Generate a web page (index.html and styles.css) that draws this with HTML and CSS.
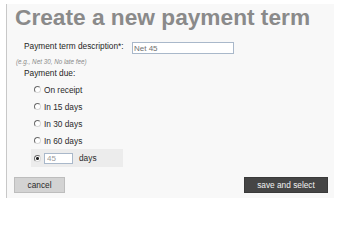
FILE: index.html
```html
<!DOCTYPE html>
<html>
<head>
<meta charset="utf-8">
<link rel="stylesheet" href="styles.css">
</head>
<body>
<div class="panel">
  <h1 class="title">Create a new payment term</h1>
  <div class="desc-row">
    <label class="desc-label" for="desc">Payment term description*:</label>
    <input class="desc-input" id="desc" type="text" value="Net 45">
  </div>
  <div class="hint">(e.g., Net 30, No late fee)</div>
  <div class="due-label">Payment due:</div>
  <div class="options">
    <label class="opt"><input class="radio" type="radio" name="due"><span>On receipt</span></label>
    <label class="opt"><input class="radio" type="radio" name="due"><span>In 15 days</span></label>
    <label class="opt"><input class="radio" type="radio" name="due"><span>In 30 days</span></label>
    <label class="opt"><input class="radio" type="radio" name="due"><span>In 60 days</span></label>
    <label class="opt opt-custom"><input class="radio" type="radio" name="due" checked><input class="days-input" type="text" value="45"><span class="days">days</span></label>
  </div>
  <div class="actions">
    <button class="btn btn-cancel">cancel</button>
    <button class="btn btn-save">save and select</button>
  </div>
</div>
</body>
</html>
```

FILE: styles.css
```css
html, body {
  margin: 0;
  padding: 0;
  background: #ffffff;
}
body {
  font-family: "Liberation Sans", Arial, sans-serif;
  color: #222;
}
.panel {
  margin: 4px 6px 0 6px;
  border-left: 1px solid #c8c8c8;
  background: #f8f8f8;
  padding: 2px 0 5px 0;
}
.title {
  margin: 0;
  padding-left: 8px;
  font-size: 22.7px;
  line-height: 23px;
  font-weight: bold;
  color: #8a8a8a;
  white-space: nowrap;
}
.desc-row {
  display: flex;
  align-items: flex-start;
  margin-top: 12px;
  padding-left: 17px;
}
.desc-label {
  width: 108px;
  font-size: 8.3px;
  line-height: 10px;
  color: #1e1e1e;
}
.desc-input {
  box-sizing: border-box;
  margin: 1px 0 0 0;
  width: 102px;
  height: 12px;
  border: 1px solid #a9b8ca;
  background: #fff;
  padding: 0 1px;
  font-family: "Liberation Sans", Arial, sans-serif;
  font-size: 8px;
  color: #707070;
  outline: none;
}
.hint {
  margin-top: 4px;
  padding-left: 9px;
  font-size: 6.3px;
  line-height: 8px;
  font-style: italic;
  color: #8a8a8a;
}
.due-label {
  margin-top: 2px;
  padding-left: 17px;
  font-size: 8.3px;
  line-height: 10px;
  color: #1e1e1e;
}
.options {
  margin-top: 3px;
  display: flex;
  flex-direction: column;
}
.opt {
  display: flex;
  align-items: center;
  height: 17px;
  margin-left: 24px;
  padding-left: 3px;
  font-size: 8.3px;
  color: #2a2a2a;
}
.opt-custom {
  width: 89px;
  height: 18px;
  background: #ececec;
}
.radio {
  appearance: none;
  -webkit-appearance: none;
  box-sizing: border-box;
  margin: 0 3px 0 0;
  width: 7px;
  height: 7px;
  border-radius: 50%;
  border: 1px solid #d8d8d8;
  border-top-color: #6a6a6a;
  border-left-color: #6a6a6a;
  background: #fff;
  flex: none;
}
.radio:checked {
  background: radial-gradient(circle, #222 0 1.3px, #fff 1.6px);
}
.days-input {
  box-sizing: border-box;
  margin: 0;
  width: 29px;
  height: 11px;
  border: 1px solid #a9b8ca;
  background: #fff;
  padding: 0 2px;
  font-family: "Liberation Sans", Arial, sans-serif;
  font-size: 8px;
  color: #9a9a9a;
  outline: none;
}
.days {
  margin-left: 6px;
}
.actions {
  display: flex;
  justify-content: space-between;
  margin-top: 10px;
  padding: 0 6px 0 7px;
}
.btn {
  box-sizing: border-box;
  height: 16px;
  padding: 0;
  font-family: "Liberation Sans", Arial, sans-serif;
  font-size: 8.3px;
  line-height: 14px;
  cursor: pointer;
}
.btn-cancel {
  width: 51px;
  background: #d3d3d3;
  border: 1px solid #bdbdbd;
  color: #2a2a2a;
}
.btn-save {
  width: 84px;
  background: #454545;
  border: 1px solid #3a3a3a;
  color: #f2f2f2;
}
```
